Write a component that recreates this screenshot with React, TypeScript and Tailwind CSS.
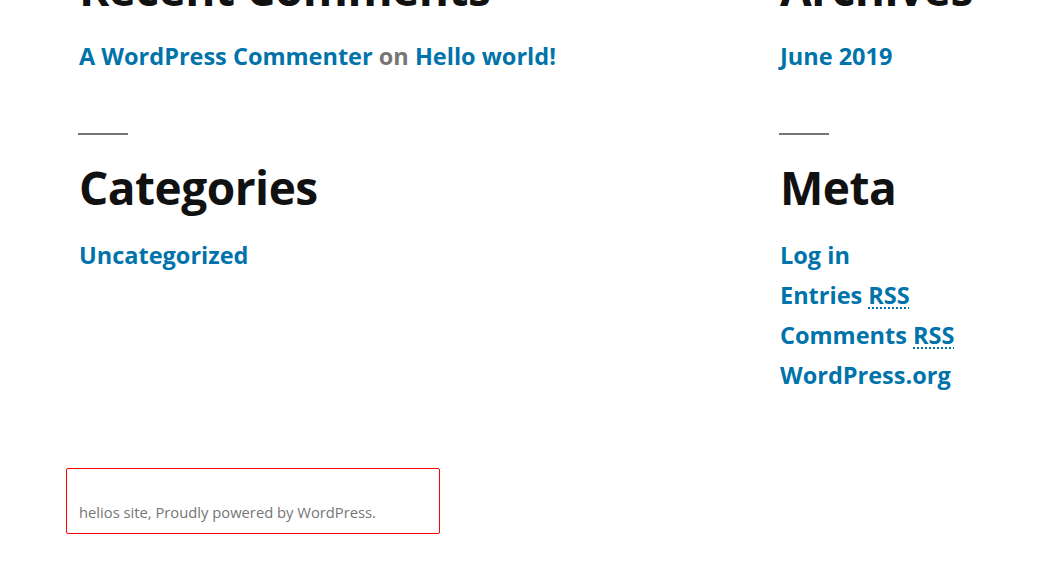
const font = { fontFamily: '"Open Sans", "Noto Sans", sans-serif' }

function Separator() {
  return <div className="h-[2px] w-[50px] bg-[#767676] -ml-px" />
}

function WidgetTitle({ children }: { children: React.ReactNode }) {
  return <h2 className="text-[46px] leading-[60px] font-bold text-[#111111] tracking-[-0.5px]">{children}</h2>
}

function LinkList({ children }: { children: React.ReactNode }) {
  return <ul className="mt-[18px] text-[23.5px] leading-[40px] font-bold">{children}</ul>
}

function Link({ children }: { children: React.ReactNode }) {
  return (
    <a href="#" className="text-[#0073aa]">
      {children}
    </a>
  )
}

function Rss() {
  return <abbr className="underline decoration-dotted underline-offset-[3px] decoration-[2px]">RSS</abbr>
}

export default function App() {
  return (
    <div className="min-h-screen bg-white overflow-hidden" style={font}>
      <div className="flex pl-[79px] -mt-[42px]">
        {/* Left column */}
        <div className="w-[701px]">
          <section>
            <WidgetTitle>Recent Comments</WidgetTitle>
            <LinkList>
              <li>
                <Link>A WordPress Commenter</Link> <span className="text-[#767676]">on</span>{' '}
                <Link>Hello world!</Link>
              </li>
            </LinkList>
          </section>
          <section className="mt-[57px]">
            <Separator />
            <div className="mt-[22px]">
              <WidgetTitle>Categories</WidgetTitle>
            </div>
            <LinkList>
              <li>
                <Link>Uncategorized</Link>
              </li>
            </LinkList>
          </section>
        </div>

        {/* Right column */}
        <div className="flex-1">
          <section>
            <WidgetTitle>Archives</WidgetTitle>
            <LinkList>
              <li>
                <Link>June 2019</Link>
              </li>
            </LinkList>
          </section>
          <section className="mt-[57px]">
            <Separator />
            <div className="mt-[22px]">
              <WidgetTitle>Meta</WidgetTitle>
            </div>
            <LinkList>
              <li>
                <Link>Log in</Link>
              </li>
              <li>
                <Link>
                  Entries <Rss />
                </Link>
              </li>
              <li>
                <Link>
                  Comments <Rss />
                </Link>
              </li>
              <li>
                <Link>WordPress.org</Link>
              </li>
            </LinkList>
          </section>
        </div>
      </div>

      {/* Site info */}
      <footer className="mt-[73px] ml-[66px] w-[374px] h-[66px] border border-[#ff0000] rounded-[2px] px-[12px] pb-[10px] flex items-end">
        <p className="text-[14.75px] leading-[22px] text-[#767676]">helios site, Proudly powered by WordPress.</p>
      </footer>
    </div>
  )
}
